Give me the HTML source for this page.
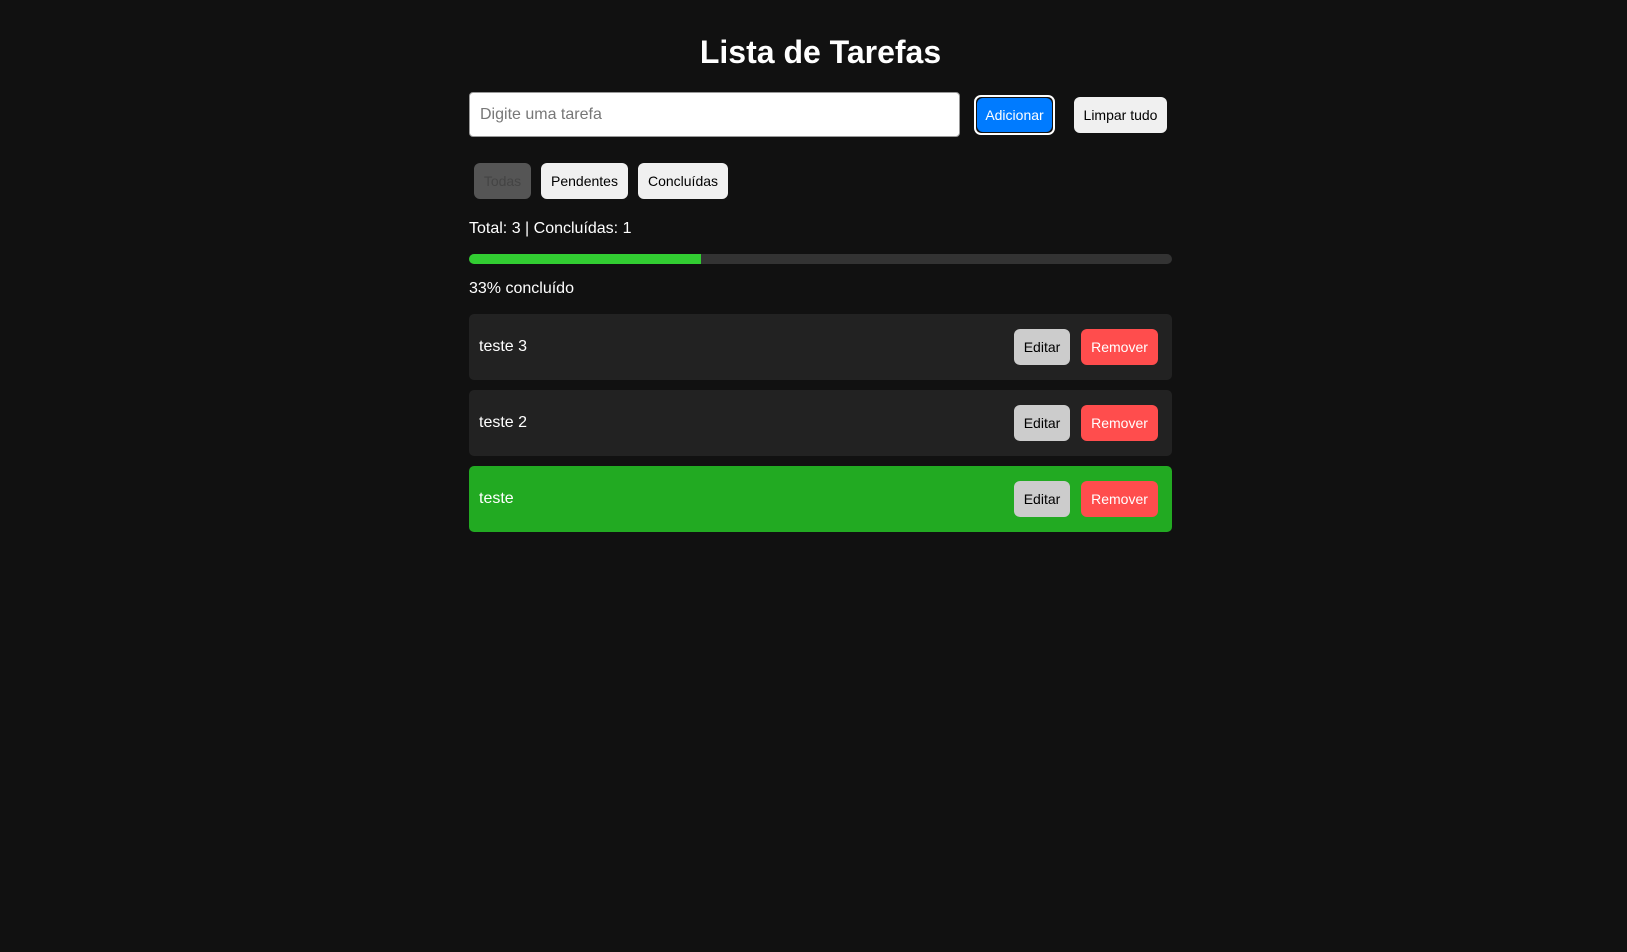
<!DOCTYPE html>
<html><head><meta charset="utf-8"><style>
*{box-sizing:border-box;margin:0;padding:0}
body{width:1627px;height:952px;background:#111;font-family:"Liberation Sans",Arial,sans-serif;color:#fff;position:relative;overflow:hidden}
.a{position:absolute}
h1{position:absolute;left:0;width:1641px;text-align:center;top:34px;font-size:32px;font-weight:bold}
.btn{position:absolute;border-radius:6px;font-size:14px;display:flex;align-items:center;justify-content:center;color:#000}
.task{position:absolute;left:469px;width:703px;height:66px;border-radius:5px;background:#222}
.task span{position:absolute;left:10px;top:0;line-height:66px;font-size:16px}
.ed{left:545px;top:15px;width:56px;height:36px;background:#ccc}
.rm{left:612px;top:15px;width:77px;height:36px;background:#ff4d4d;color:#fff}
</style></head><body>
<h1>Lista de Tarefas</h1>
<div class="a" style="left:469px;top:92px;width:491px;height:45px;background:#fff;border:1px solid #999;border-radius:4px;color:#777;font-size:16px;line-height:43px;padding-left:10px">Digite uma tarefa</div>
<div class="a" style="left:974px;top:95px;width:81px;height:40px;border:2px solid #fff;border-radius:7px;background:#111"></div>
<div class="btn" style="left:977px;top:98px;width:75px;height:34px;background:#007bff;color:#fff">Adicionar</div>
<div class="btn" style="left:1074px;top:97px;width:93px;height:36px;background:#f0f0f0">Limpar tudo</div>
<div class="btn" style="left:474px;top:163px;width:57px;height:36px;background:#555;color:#444">Todas</div>
<div class="btn" style="left:541px;top:163px;width:87px;height:36px;background:#f0f0f0">Pendentes</div>
<div class="btn" style="left:638px;top:163px;width:90px;height:36px;background:#f0f0f0">Concluídas</div>
<div class="a" style="left:469px;top:220px;font-size:16px">Total: 3 | Concluídas: 1</div>
<div class="a" style="left:469px;top:254px;width:703px;height:10px;background:#333;border-radius:5px;overflow:hidden"><div style="width:232px;height:10px;background:#32cd32"></div></div>
<div class="a" style="left:469px;top:280px;font-size:16px">33% concluído</div>
<div class="task" style="top:314px"><span>teste 3</span><div class="btn ed">Editar</div><div class="btn rm">Remover</div></div>
<div class="task" style="top:390px"><span>teste 2</span><div class="btn ed">Editar</div><div class="btn rm">Remover</div></div>
<div class="task" style="top:466px;background:#22aa22"><span>teste</span><div class="btn ed">Editar</div><div class="btn rm">Remover</div></div>
</body></html>
